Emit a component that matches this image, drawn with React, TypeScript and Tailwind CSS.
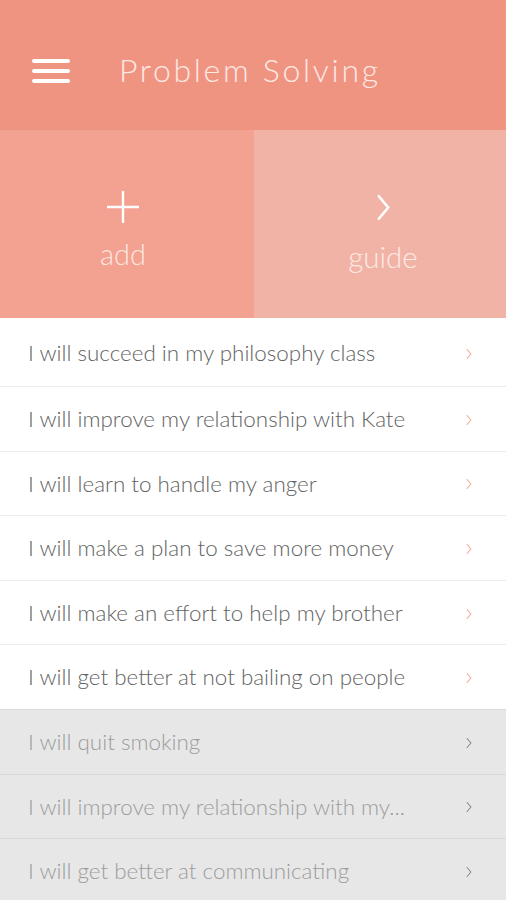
import React from "react";

const items = [
  { t: "I will succeed in my philosophy class", done: false },
  { t: "I will improve my relationship with Kate", done: false },
  { t: "I will learn to handle my anger", done: false },
  { t: "I will make a plan to save more money", done: false },
  { t: "I will make an effort to help my brother", done: false },
  { t: "I will get better at not bailing on people", done: false },
  { t: "I will quit smoking", done: true },
  { t: "I will improve my relationship with my...", done: true },
  { t: "I will get better at communicating", done: true },
];

function Chevron({ className }: { className?: string }) {
  return (
    <svg viewBox="0 0 8 16" className={className} fill="none" stroke="currentColor" strokeWidth="1.4" strokeLinecap="round">
      <path d="M1.5 2 L6.5 8 L1.5 14" />
    </svg>
  );
}

export default function App() {
  return (
    <div className="w-[506px] h-[900px] overflow-hidden bg-white" style={{ fontFamily: "Lato, 'Open Sans', sans-serif" }}>
      <div className="h-[130px] bg-[#f09482] flex items-center">
        <div className="ml-[32px] mt-[11px] w-[38px] flex flex-col gap-[6px]">
          <div className="h-[4px] rounded-full bg-white" />
          <div className="h-[4px] rounded-full bg-white" />
          <div className="h-[4px] rounded-full bg-white" />
        </div>
        <div className="ml-[49px] mt-[10px] text-[32px] font-light tracking-[2.7px] text-[#fde9e4]">Problem Solving</div>
      </div>
      <div className="flex h-[188px]">
        <div className="w-[254px] bg-[#f3a191] flex flex-col items-center justify-center pr-[8px] pt-[13px]">
          <svg viewBox="0 0 34 34" className="w-[34px] h-[34px] text-white" stroke="currentColor" strokeWidth="2.4">
            <path d="M17 1 V33 M1 17 H33" />
          </svg>
          <div className="text-[29px] font-light text-[#fde6e0] mt-[12px] leading-[36px]">add</div>
        </div>
        <div className="flex-1 bg-[#f2b3a7] flex flex-col items-center justify-center pl-[6px] pt-[20px]">
          <Chevron className="w-[15px] h-[31px] text-white" />
          <div className="text-[29.5px] font-light text-[#fdeae5] mt-[14px] leading-[40px]">guide</div>
        </div>
      </div>
      <div className="flex flex-col">
        {items.map((it, i) => (
          <div
            key={i}
            className={`${i === 0 ? "h-[68px] pt-[2px]" : "h-[64.6px]"} flex items-center justify-between pl-[28px] pr-[34px] ${i === 0 ? "" : "border-t"} ${it.done ? "bg-[#e7e7e7] border-[#dadada]" : "bg-white border-[#ececec]"}`}
          >
            <span className={`text-[22.4px] font-light ${it.done ? "text-[#9c9c9c]" : "text-[#626262]"}`}>{it.t}</span>
            <Chevron className={`w-[6px] h-[14px] mt-[2px] ${it.done ? "text-[#8a8a8a]" : "text-[#f4a898]"}`} />
          </div>
        ))}
      </div>
    </div>
  );
}
